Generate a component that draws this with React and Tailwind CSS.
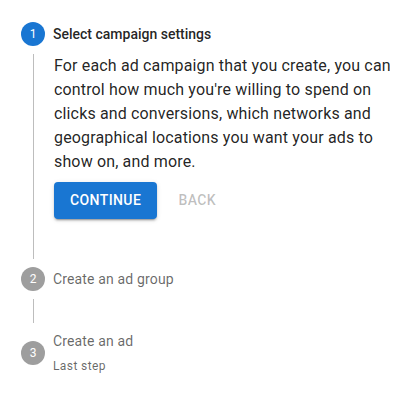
import React from "react";

const StepIcon = ({ n, active }) => (
  <div
    className={
      "flex h-6 w-6 shrink-0 items-center justify-center rounded-full text-[12px] leading-none text-white " +
      (active ? "bg-[#1976d2]" : "bg-[#9e9e9e]")
    }
  >
    {n}
  </div>
);

const Connector = () => <div className="ml-3 h-6 border-l border-[#bdbdbd]" />;

export default function App() {
  return (
    <div className="w-[400px] bg-white pl-[21px] pt-[14px] font-['Roboto',sans-serif] antialiased">
      {/* step 1 - active */}
      <div className="flex items-center py-2">
        <StepIcon n={1} active />
        <span className="pl-2 text-[14px] font-medium leading-5 text-black/[0.87]">
          Select campaign settings
        </span>
      </div>
      <div className="ml-3 border-l border-[#bdbdbd] pb-4 pl-5 pr-2">
        <p className="text-[16px] leading-6 tracking-[0.00938em] text-black/[0.87]">
          For each ad campaign that you create, you can control how much you're willing to spend on
          clicks and conversions, which networks and geographical locations you want your ads to
          show on, and more.
        </p>
        <div className="flex items-start">
          <button className="mt-2 mr-2 h-[36.5px] min-w-16 rounded px-4 text-[14px] font-medium uppercase tracking-[0.02857em] text-white bg-[#1976d2] shadow-[0px_3px_1px_-2px_rgba(0,0,0,0.2),0px_2px_2px_0px_rgba(0,0,0,0.14),0px_1px_5px_0px_rgba(0,0,0,0.12)]">
            Continue
          </button>
          <button
            disabled
            className="mt-2 mr-2 h-[36.5px] min-w-16 rounded px-2 text-[14px] font-medium uppercase tracking-[0.02857em] text-black/[0.26]"
          >
            Back
          </button>
        </div>
      </div>
      <Connector />

      {/* step 2 */}
      <div className="flex items-center py-2">
        <StepIcon n={2} />
        <span className="pl-2 text-[14px] leading-5 tracking-[0.01071em] text-black/60">
          Create an ad group
        </span>
      </div>
      <Connector />

      {/* step 3 */}
      <div className="flex items-center py-2">
        <StepIcon n={3} />
        <div className="flex flex-col pl-2">
          <span className="text-[14px] leading-5 tracking-[0.01071em] text-black/60">Create an ad</span>
          <span className="mt-[6px] text-[12px] leading-[18px] tracking-[0.03333em] text-black/60">
            Last step
          </span>
        </div>
      </div>
    </div>
  );
}
